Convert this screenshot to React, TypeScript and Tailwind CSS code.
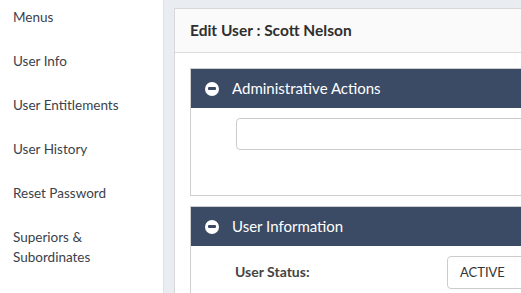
const menu = [
  "Menus",
  "User Info",
  "User Entitlements",
  "User History",
  "Reset Password",
];

function PanelHeader({ title }: { title: string }) {
  return (
    <div className="flex h-[39px] items-center gap-[13px] bg-[#3b4a65] pl-[14px] text-[15px] text-white">
      <span className="flex size-[14px] items-center justify-center rounded-full bg-white">
        <span className="h-[3px] w-[8px] rounded-[1px] bg-[#3b4a65]" />
      </span>
      {title}
    </div>
  );
}

export default function App() {
  return (
    <div
      className="flex h-[293px] w-[521px] overflow-hidden text-[#333]"
      style={{ fontFamily: "Lato, 'Noto Sans', sans-serif" }}
    >
      <aside className="w-[164px] shrink-0 border-r border-[#dfe3e8] bg-white pl-[13px] pt-[7px] text-[13.5px] text-[#3a3f4b]">
        {menu.map((m) => (
          <div key={m} className="h-[44px] leading-[20px]">
            {m}
          </div>
        ))}
        <div className="leading-[20px]">
          Superiors &amp;
          <br />
          Subordinates
        </div>
      </aside>

      <main className="min-w-0 flex-1 bg-[#e9edf2] pl-[10px] pt-[8px]">
        <section className="w-[520px] border border-[#d8d8d8] bg-white">
          <header className="flex h-[44px] items-center border-b border-[#dcdcdc] bg-[#fafafa] pl-[15px] text-[15.5px] font-bold text-[#2f2f2f]">
            Edit User : Scott Nelson
          </header>
          <div className="px-[15px] pt-[15px]">
            <div className="border border-[#cfcfcf]">
              <PanelHeader title="Administrative Actions" />
              <div className="h-[87px] pl-[45px] pt-[10px]">
                <div className="h-[32px] rounded-[4px] border border-[#cccccc]" />
              </div>
            </div>
            <div className="mt-[10px] border border-[#cfcfcf]">
              <PanelHeader title="User Information" />
              <div className="flex h-[60px] items-start pl-[44px] pt-[10px]">
                <span className="mt-[5px] w-[212px] text-[14px] font-bold text-[#444]">
                  User Status:
                </span>
                <div className="flex h-[33px] w-[120px] items-center rounded-[4px] border border-[#cccccc] pl-[12px] text-[13px] text-[#333]">
                  ACTIVE
                </div>
              </div>
            </div>
          </div>
        </section>
      </main>
    </div>
  );
}
